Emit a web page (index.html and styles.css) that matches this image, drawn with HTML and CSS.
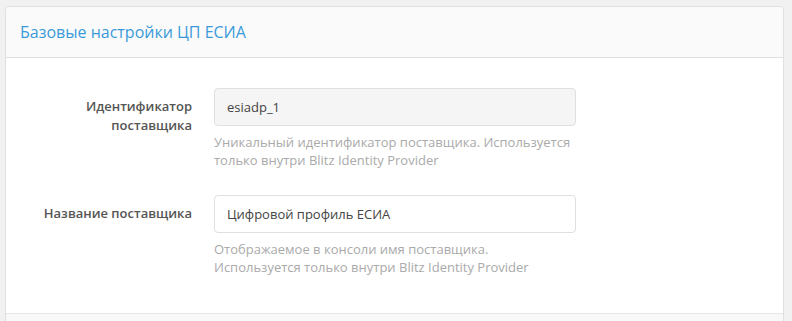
FILE: index.html
```html
<!DOCTYPE html>
<html lang="ru">
<head>
    <meta charset="UTF-8">
    <title>Базовые настройки ЦП ЕСИА</title>
    <link rel="stylesheet" href="styles.css">
</head>
<body>
    <div class="panel">
        <div class="panel-heading">
            <h3 class="panel-title">Базовые настройки ЦП ЕСИА</h3>
        </div>
        <div class="panel-body">
            <div class="form-group">
                <label class="control-label">Идентификатор поставщика</label>
                <div class="control">
                    <input class="form-control" type="text" value="esiadp_1" readonly>
                    <p class="help-block">Уникальный идентификатор поставщика. Используется только внутри Blitz Identity Provider</p>
                </div>
            </div>
            <div class="form-group">
                <label class="control-label">Название поставщика</label>
                <div class="control">
                    <input class="form-control" type="text" value="Цифровой профиль ЕСИА">
                    <p class="help-block">Отображаемое в консоли имя поставщика.<br>Используется только внутри Blitz Identity Provider</p>
                </div>
            </div>
        </div>
        <div class="panel-footer"></div>
    </div>
</body>
</html>
```

FILE: styles.css
```css
body {
    margin: 0;
    padding: 6px 8px 0 5px;
    background: #f1f1f1;
    font-family: "Open Sans", "Noto Sans", sans-serif;
    color: #555;
}
.panel {
    background: #fff;
    border: 1px solid #e0e0e0;
    border-radius: 4px 4px 0 0;
}
.panel-heading {
    height: 50px;
    padding: 0 14px;
    display: flex;
    align-items: center;
    background: #fafafa;
    border-bottom: 1px solid #e0e0e0;
    border-radius: 4px 4px 0 0;
}
.panel-title {
    margin: 0;
    font-size: 16px;
    font-weight: 400;
    color: #3a9ad9;
}
.panel-body {
    padding: 30px 0 37px;
}
.form-group {
    display: grid;
    grid-template-columns: 186px 362px;
    column-gap: 22px;
}
.form-group + .form-group {
    margin-top: 26px;
}
.control-label {
    padding-top: 9px;
    width: 165px;
    justify-self: end;
    text-align: right;
    font-size: 13px;
    font-weight: 600;
    line-height: 19px;
    color: #555;
}
.form-control {
    box-sizing: border-box;
    width: 100%;
    height: 38px;
    padding: 0 12px;
    border: 1px solid #e0e0e0;
    border-radius: 4px;
    background: #fff;
    font-family: inherit;
    font-size: 13px;
    color: #444;
    outline: none;
}
.form-control[readonly] {
    background: #f5f5f5;
}
.help-block {
    margin: 7px 0 0;
    font-size: 13px;
    line-height: 18px;
    color: #aaa;
}
.panel-footer {
    height: 10px;
    background: #f8f8f8;
    border-top: 1px solid #e6e6e6;
}
```
